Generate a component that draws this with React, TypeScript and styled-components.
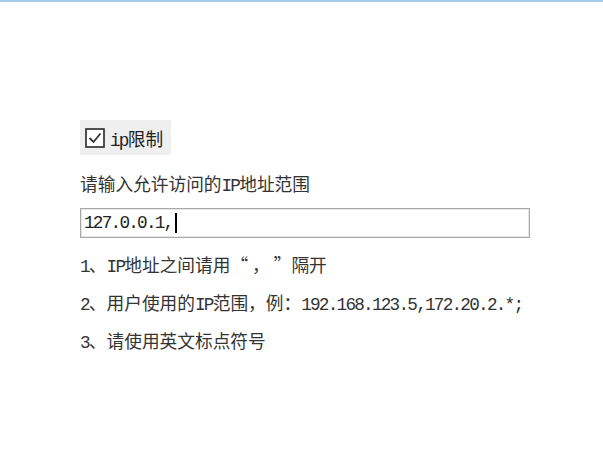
import React from "react";
import styled, { createGlobalStyle } from "styled-components";

const Global = createGlobalStyle`
  html, body { margin: 0; padding: 0; background: #fff; }
  body {
    font-family: "Noto Sans CJK SC", "Liberation Sans", sans-serif;
    color: #333;
  }
`;

const Page = styled.div`
  width: 603px;
  min-height: 472px;
  border-top: 2px solid #a6caec;
  box-sizing: border-box;
  padding: 118px 0 0 80px;
  font-size: 17.7px;
`;

const CheckRow = styled.label`
  display: inline-flex;
  align-items: center;
  gap: 5px;
  height: 35px;
  padding: 0 8px 0 5px;
  background: #efefef;
  color: #222;
  box-sizing: border-box;
`;

const Box = styled.span`
  display: inline-flex;
  width: 20px;
  height: 20px;
`;

const Latin = styled.span`
  font-family: "Liberation Mono", monospace;
  letter-spacing: -0.1em;
`;

const Label = styled.div`
  margin-top: 18px;
  line-height: 20px;
  height: 20px;
`;

const Field = styled.div`
  margin-top: 15px;
  width: 450px;
  height: 30px;
  box-sizing: border-box;
  border: 1px solid #a9a9a9;
  box-shadow: inset 0 0 0 1px #e6e6e6;
  display: flex;
  align-items: center;
  padding-left: 3px;
  color: #222;
`;

const Caret = styled.span`
  display: inline-block;
  width: 2px;
  height: 20px;
  background: #000;
  margin-left: 3px;
`;

const Notes = styled.div`
  margin-top: 7px;
  display: flex;
  flex-direction: column;
`;

const Note = styled.div`
  line-height: 38px;
  height: 38px;
  white-space: nowrap;
`;

export default function App() {
  return (
    <>
      <Global />
      <Page>
        <CheckRow>
          <Box>
            <svg width="20" height="20" viewBox="0 0 20 20">
              <rect x="1" y="1" width="18" height="18" fill="#fff" stroke="#333" strokeWidth="1.7" />
              <path d="M4.5 10 L8.5 14 L15.5 5.5" fill="none" stroke="#333" strokeWidth="1.8" />
            </svg>
          </Box>
          <span>
            <Latin>ip</Latin>限制
          </span>
        </CheckRow>
        <Label>
          请输入允许访问的<Latin>IP</Latin>地址范围
        </Label>
        <Field>
          <Latin>127.0.0.1,</Latin>
          <Caret />
        </Field>
        <Notes>
          <Note>
            <Latin>1</Latin>、<Latin>IP</Latin>地址之间请用“ ， ”隔开
          </Note>
          <Note>
            <Latin>2</Latin>、用户使用的<Latin>IP</Latin>范围，例：<Latin>192.168.123.5,172.20.2.*;</Latin>
          </Note>
          <Note>
            <Latin>3</Latin>、请使用英文标点符号
          </Note>
        </Notes>
      </Page>
    </>
  );
}
